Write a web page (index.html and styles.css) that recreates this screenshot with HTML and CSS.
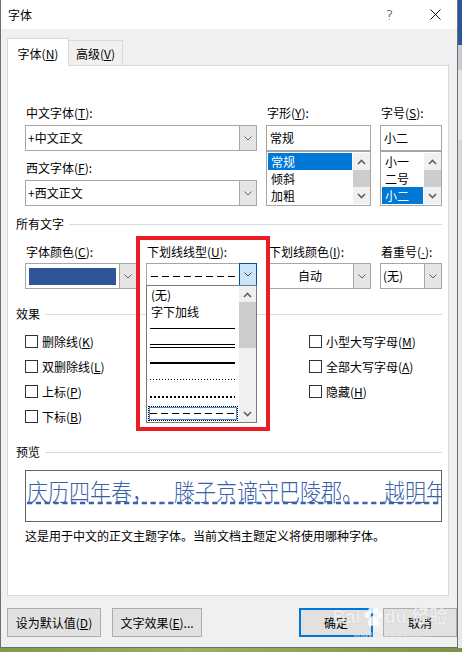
FILE: index.html
```html
<!DOCTYPE html>
<html lang="zh-CN">
<head>
<meta charset="utf-8">
<title>字体</title>
<link rel="stylesheet" href="styles.css">
</head>
<body>
<div class="screen">
  <div class="dialog">
    <div class="titlebar">
      <span class="title">字体</span>
      <span class="tb-btn tb-help">?</span>
      <span class="tb-btn tb-close"><svg width="11" height="11" viewBox="0 0 11 11"><path d="M0.5 0.5 L10.5 10.5 M10.5 0.5 L0.5 10.5" stroke="#111" stroke-width="1" fill="none"/></svg></span>
    </div>
    <div class="client">
      <div class="tabs">
        <div class="tab active">字体(<u>N</u>)</div>
        <div class="tab">高级(<u>V</u>)</div>
      </div>
      <div class="panel">
        <div class="toprow">
          <div class="col c1">
            <div class="lbl">中文字体(<u>T</u>):</div>
            <div class="combo"><span class="val">+中文正文</span><span class="dd"><svg width="8" height="5" viewBox="0 0 8 5"><path d="M0.5 0.5 L4 4 L7.5 0.5" fill="none" stroke="#606060"/></svg></span></div>
            <div class="lbl lbl2">西文字体(<u>F</u>):</div>
            <div class="combo"><span class="val">+西文正文</span><span class="dd"><svg width="8" height="5" viewBox="0 0 8 5"><path d="M0.5 0.5 L4 4 L7.5 0.5" fill="none" stroke="#606060"/></svg></span></div>
          </div>
          <div class="col c2">
            <div class="lbl">字形(<u>Y</u>):</div>
            <div class="edit">常规</div>
            <div class="listbox">
              <div class="items">
                <div class="item sel">常规</div>
                <div class="item">倾斜</div>
                <div class="item">加粗</div>
              </div>
              <div class="vscroll">
                <span class="arr"><svg width="9" height="6" viewBox="0 0 9 6"><path d="M1 5 L4.5 1.5 L8 5" fill="none" stroke="#606060" stroke-width="1.6"/></svg></span>
                <span class="thumb"></span>
                <span class="arr"><svg width="9" height="6" viewBox="0 0 9 6"><path d="M1 1 L4.5 4.5 L8 1" fill="none" stroke="#606060" stroke-width="1.6"/></svg></span>
              </div>
            </div>
          </div>
          <div class="col c3">
            <div class="lbl">字号(<u>S</u>):</div>
            <div class="edit">小二</div>
            <div class="listbox">
              <div class="items">
                <div class="item">小一</div>
                <div class="item">二号</div>
                <div class="item sel">小二</div>
              </div>
              <div class="vscroll">
                <span class="arr"><svg width="9" height="6" viewBox="0 0 9 6"><path d="M1 5 L4.5 1.5 L8 5" fill="none" stroke="#606060" stroke-width="1.6"/></svg></span>
                <span class="thumb"></span>
                <span class="arr"><svg width="9" height="6" viewBox="0 0 9 6"><path d="M1 1 L4.5 4.5 L8 1" fill="none" stroke="#606060" stroke-width="1.6"/></svg></span>
              </div>
            </div>
          </div>
        </div>

        <div class="grp g1">所有文字</div>

        <div class="row2">
          <div class="cell">
            <div class="lbl">字体颜色(<u>C</u>):</div>
            <div class="combo"><span class="val"><span class="swatch"></span></span><span class="dd"><svg width="8" height="5" viewBox="0 0 8 5"><path d="M0.5 0.5 L4 4 L7.5 0.5" fill="none" stroke="#606060"/></svg></span></div>
          </div>
          <div class="cell ul-cell">
            <div class="lbl">下划线线型(<u>U</u>):</div>
            <div class="combo ul-combo"><span class="val"><span class="dashline"></span></span><span class="dd hot"><svg width="8" height="5" viewBox="0 0 8 5"><path d="M0.5 0.5 L4 4 L7.5 0.5" fill="none" stroke="#404040"/></svg></span></div>
            <div class="droplist">
              <div class="dl-items">
                <div class="dl-item txt">(无)</div>
                <div class="dl-item txt">字下加线</div>
                <div class="dl-item"><span class="ln single"></span></div>
                <div class="dl-item"><span class="ln double"></span></div>
                <div class="dl-item"><span class="ln thick"></span></div>
                <div class="dl-item"><span class="ln dotted"></span></div>
                <div class="dl-item"><span class="ln dotted2"></span></div>
                <div class="dl-item focus"><span class="ln dashed"></span></div>
              </div>
              <div class="vscroll dl-scroll">
                <span class="arr"><svg width="9" height="6" viewBox="0 0 9 6"><path d="M1 5 L4.5 1.5 L8 5" fill="none" stroke="#606060" stroke-width="1.6"/></svg></span>
                <span class="thumb"></span>
                <span class="track"></span>
                <span class="arr"><svg width="9" height="6" viewBox="0 0 9 6"><path d="M1 1 L4.5 4.5 L8 1" fill="none" stroke="#606060" stroke-width="1.6"/></svg></span>
              </div>
            </div>
          </div>
          <div class="cell">
            <div class="lbl lbl-ind">下划线颜色(<u>I</u>):</div>
            <div class="combo"><span class="val center">自动</span><span class="dd"><svg width="8" height="5" viewBox="0 0 8 5"><path d="M0.5 0.5 L4 4 L7.5 0.5" fill="none" stroke="#606060"/></svg></span></div>
          </div>
          <div class="cell">
            <div class="lbl">着重号(<u class="latin">·</u>):</div>
            <div class="combo"><span class="val">(无)</span><span class="dd"><svg width="8" height="5" viewBox="0 0 8 5"><path d="M0.5 0.5 L4 4 L7.5 0.5" fill="none" stroke="#606060"/></svg></span></div>
          </div>
        </div>

        <div class="grp g2">效果</div>

        <div class="effects">
          <div class="fx-col fx-left">
            <div class="chk"><span class="box"></span>删除线(<u>K</u>)</div>
            <div class="chk"><span class="box"></span>双删除线(<u>L</u>)</div>
            <div class="chk"><span class="box"></span>上标(<u>P</u>)</div>
            <div class="chk"><span class="box"></span>下标(<u>B</u>)</div>
          </div>
          <div class="fx-col fx-right">
            <div class="chk"><span class="box"></span>小型大写字母(<u>M</u>)</div>
            <div class="chk"><span class="box"></span>全部大写字母(<u>A</u>)</div>
            <div class="chk"><span class="box"></span>隐藏(<u>H</u>)</div>
          </div>
        </div>

        <div class="grp g3">预览</div>

        <div class="preview"><span class="ptext">庆历四年春，&emsp;滕子京谪守巴陵郡。&emsp;越明年</span></div>
        <div class="desc">这是用于中文的正文主题字体。当前文档主题定义将使用哪种字体。</div>

        <div class="redbox"></div>
      </div>

      <div class="buttons">
        <div class="btn b-def">设为默认值(<u>D</u>)</div>
        <div class="btn b-fx">文字效果(<u>E</u>)...</div>
        <div class="spacer"></div>
        <div class="btn b-ok">确定</div>
        <div class="btn b-cancel">取消</div>
      </div>

      <div class="watermark">
        <span class="wm-main">Bai<svg class="wm-paw" width="22" height="22" viewBox="0 0 22 22"><ellipse cx="5" cy="9" rx="2.6" ry="3.2" fill="rgba(255,255,255,0.8)"/><ellipse cx="9" cy="4.5" rx="2.6" ry="3.2" fill="rgba(255,255,255,0.8)"/><ellipse cx="14" cy="4.5" rx="2.6" ry="3.2" fill="rgba(255,255,255,0.8)"/><ellipse cx="18" cy="9" rx="2.6" ry="3.2" fill="rgba(255,255,255,0.8)"/><path d="M11.5 10 C8 10 5 15 6 18 C7 21 10 19.5 11.5 19.5 C13 19.5 16 21 17 18 C18 15 15 10 11.5 10 Z" fill="rgba(255,255,255,0.8)"/></svg>du 经验</span>
        <span class="wm-sub">jingyan.baidu.com</span>
      </div>
    </div>
  </div>
  <div class="side"></div>
</div>
</body>
</html>
```

FILE: styles.css
```css
* { box-sizing: border-box; }
html, body { margin: 0; padding: 0; }
body {
  width: 462px;
  height: 652px;
  overflow: hidden;
  background: linear-gradient(90deg, #7f9a4c, #9ab062 40%, #7d9448);
  font-family: "Noto Sans CJK SC", "Noto Sans", sans-serif;
  font-size: 12px;
  line-height: 16px;
  color: #000;
}
u { text-decoration: underline; text-underline-offset: 1px; }
.latin { font-family: "Liberation Sans", sans-serif; }

.screen { display: flex; height: 648px; }
.side {
  width: 4px;
  height: 648px;
  background: linear-gradient(#2b579a 0 45px, #c9cdd3 45px 70px, #e4e4e4 70px 140px, #d8d8d8 140px 200px, #e9e9e9 200px);
}

.dialog {
  width: 458px;
  height: 648px;
  border: 1px solid #6e6e6e;
  border-top: none;
  background: #f0f0f0;
  display: flex;
  flex-direction: column;
}

.titlebar {
  height: 29px;
  background: #fff;
  display: flex;
  align-items: center;
  flex: none;
}
.title { padding-left: 7px; flex: 1; line-height: 29px; }
.tb-btn {
  width: 46px;
  height: 29px;
  display: flex;
  align-items: center;
  justify-content: center;
}
.tb-help { font-family: "DejaVu Sans", sans-serif; font-size: 14px; font-weight: 300; color: #111; padding-left: 3px; }
.tb-close { padding-left: 2px; }

.client {
  flex: 1;
  padding: 9px 0 0 6px;
  position: relative;
}

.tabs { display: flex; align-items: flex-end; height: 27px; }
.tab {
  border: 1px solid #d9d9d9;
  border-bottom: none;
  text-align: center;
}
.tab.active {
  width: 62px;
  height: 28px;
  padding-top: 7px;
  background: #fff;
  margin-bottom: -1px;
  position: relative;
  z-index: 1;
}
.tab:not(.active) {
  width: 54px;
  height: 25px;
  padding-top: 5px;
  border-left: none;
  background: #f0f0f0;
}

.panel {
  width: 442px;
  height: 531px;
  border: 1px solid #d9d9d9;
  background: #fff;
  position: relative;
  padding: 39px 6px 0 17px;
}

.lbl { height: 16px; padding-left: 1px; margin-bottom: 4px; white-space: nowrap; }
.lbl2 { margin-top: 9px; }
.lbl-ind { padding-left: 3px; }

.toprow { display: flex; gap: 9px; }
.c1 { width: 232px; }
.c2 { width: 105px; }
.c3 { width: 62px; }

.combo {
  height: 26px;
  border: 1px solid #a6a6a6;
  background: #fff;
  display: flex;
}
.combo .val {
  flex: 1;
  padding-left: 2px;
  line-height: 24px;
  white-space: nowrap;
  overflow: hidden;
  display: flex;
  align-items: center;
}
.combo .val.center { justify-content: center; padding-left: 0; }
.combo .dd {
  width: 17px;
  background: #e5e5e5;
  border-left: 1px solid #a6a6a6;
  display: flex;
  align-items: center;
  justify-content: center;
  flex: none;
}
.combo .dd.hot {
  background: #cce4f7;
  border: 1px solid #005499;
  margin: -1px -1px 2px 0;
  width: 18px;
}

.edit {
  height: 26px;
  border: 1px solid #a6a6a6;
  padding-left: 3px;
  line-height: 24px;
}
.listbox {
  height: 55px;
  border: 1px solid #a6a6a6;
  display: flex;
  padding: 1px 0 1px 0;
}
.listbox .items { flex: 1; padding: 0 1px 0 1px; }
.item { height: 17px; line-height: 17px; padding-left: 3px; }
.item.sel { background: #0078d7; color: #fff; }

.vscroll {
  width: 17px;
  background: #f0f0f0;
  display: flex;
  flex-direction: column;
  flex: none;
}
.vscroll .arr { height: 17px; display: flex; align-items: center; justify-content: center; flex: none; }
.vscroll .thumb { flex: 1; background: #cdcdcd; }

.grp {
  display: flex;
  align-items: center;
  height: 16px;
  margin-left: -9px;
  white-space: nowrap;
}
.grp::after {
  content: "";
  flex: 1;
  height: 1px;
  background: #dcdcdc;
  margin-left: 5px;
}
.g1 { margin-top: 10px; }
.g2 { margin-top: 17px; }
.g3 { margin-top: 15px; }

.row2 {
  display: grid;
  grid-template-columns: 112px 111px 105px 62px;
  column-gap: 9px;
  margin-top: 12px;
}
.row2 .lbl { margin-bottom: 3px; }
.ul-cell { position: relative; }
.swatch { display: block; width: 87px; height: 17px; background: #2f5597; margin-left: 1px; }
.dashline {
  display: block;
  width: 84px;
  height: 1px;
  margin-left: 2px;
  background: repeating-linear-gradient(90deg, #000 0 7px, transparent 7px 11px);
}

.droplist {
  position: absolute;
  left: 0;
  top: 41px;
  width: 111px;
  height: 138px;
  border: 1px solid #7a7a7a;
  background: #fff;
  display: flex;
  z-index: 2;
}
.dl-items { flex: 1; }
.dl-item {
  height: 17px;
  display: flex;
  align-items: center;
  padding: 0 4px 0 3px;
}
.dl-item.txt { padding-left: 4px; }
.dl-item.focus {
  margin: 1px 1px 0 1px;
  height: 15px;
  border: 1px dotted #000;
  box-shadow: inset 0 0 0 1px #3c8ee0;
  padding: 0 2px 0 1px;
}
.ln { display: block; width: 85px; }
.ln.single { height: 1px; background: #000; }
.ln.double { height: 4px; border-top: 1px solid #000; border-bottom: 1px solid #000; }
.ln.thick { height: 2px; background: #000; }
.ln.dotted { height: 1px; background: repeating-linear-gradient(90deg, #000 0 1px, transparent 1px 3px); }
.ln.dotted2 { height: 2px; background: repeating-linear-gradient(90deg, #000 0 2px, transparent 2px 4px); }
.ln.dashed { height: 1px; background: repeating-linear-gradient(90deg, #000 0 7px, transparent 7px 11px); }
.dl-scroll .thumb { flex: none; height: 46px; margin-top: -1px; }
.dl-scroll .track { flex: 1; }

.effects { display: flex; margin-top: 7px; }
.fx-left { width: 284px; flex: none; }
.fx-right { flex: 1; }
.chk { height: 25px; display: flex; align-items: center; white-space: nowrap; }
.box {
  width: 13px;
  height: 13px;
  border: 1px solid #333;
  margin-right: 4px;
  flex: none;
}

.preview {
  margin-top: 10px;
  height: 52px;
  border: 1px solid #646464;
  overflow: hidden;
  white-space: nowrap;
  padding: 5px 0 0 1px;
}
.ptext {
  display: inline-block;
  font-size: 24px;
  font-weight: 300;
  line-height: 30px;
  color: #3a62a8;
  text-decoration: underline dashed #3a62a8;
  text-underline-offset: 1px;
  transform: scaleX(0.875);
  transform-origin: 0 50%;
}
.desc { margin-top: 6px; white-space: nowrap; }

.redbox {
  position: absolute;
  left: 128px;
  top: 170px;
  width: 134px;
  height: 195px;
  border: 4px solid #ec1c24;
  z-index: 3;
  pointer-events: none;
}

.buttons {
  display: flex;
  margin-top: 12px;
  height: 29px;
  gap: 11px;
}
.spacer { flex: 1; }
.btn {
  height: 29px;
  border: 1px solid #adadad;
  background: #e1e1e1;
  display: flex;
  align-items: center;
  justify-content: center;
  white-space: nowrap;
}
.b-def { width: 94px; }
.b-fx { width: 90px; }
.b-ok { width: 74px; border: 2px solid #0078d7; }
.b-cancel { width: 74px; margin-left: -1px; }

.watermark {
  position: absolute;
  left: 342px;
  top: 576px;
  width: 94px;
  display: flex;
  flex-direction: column;
  align-items: center;
  pointer-events: none;
  z-index: 5;
}
.wm-main {
  display: flex;
  align-items: center;
  font-family: "Liberation Sans", "Noto Sans CJK SC", sans-serif;
  font-weight: bold;
  font-size: 18px;
  line-height: 24px;
  color: rgba(255, 255, 255, 0.75);
  text-shadow: 0 0 1px rgba(0, 0, 0, 0.18);
  white-space: nowrap;
}
.wm-paw { margin: 0 1px; }
.wm-sub {
  font-family: "Liberation Sans", sans-serif;
  font-size: 9px;
  line-height: 11px;
  color: rgba(255, 255, 255, 0.7);
  text-shadow: 0 0 1px rgba(0, 0, 0, 0.15);
  white-space: nowrap;
}
```
